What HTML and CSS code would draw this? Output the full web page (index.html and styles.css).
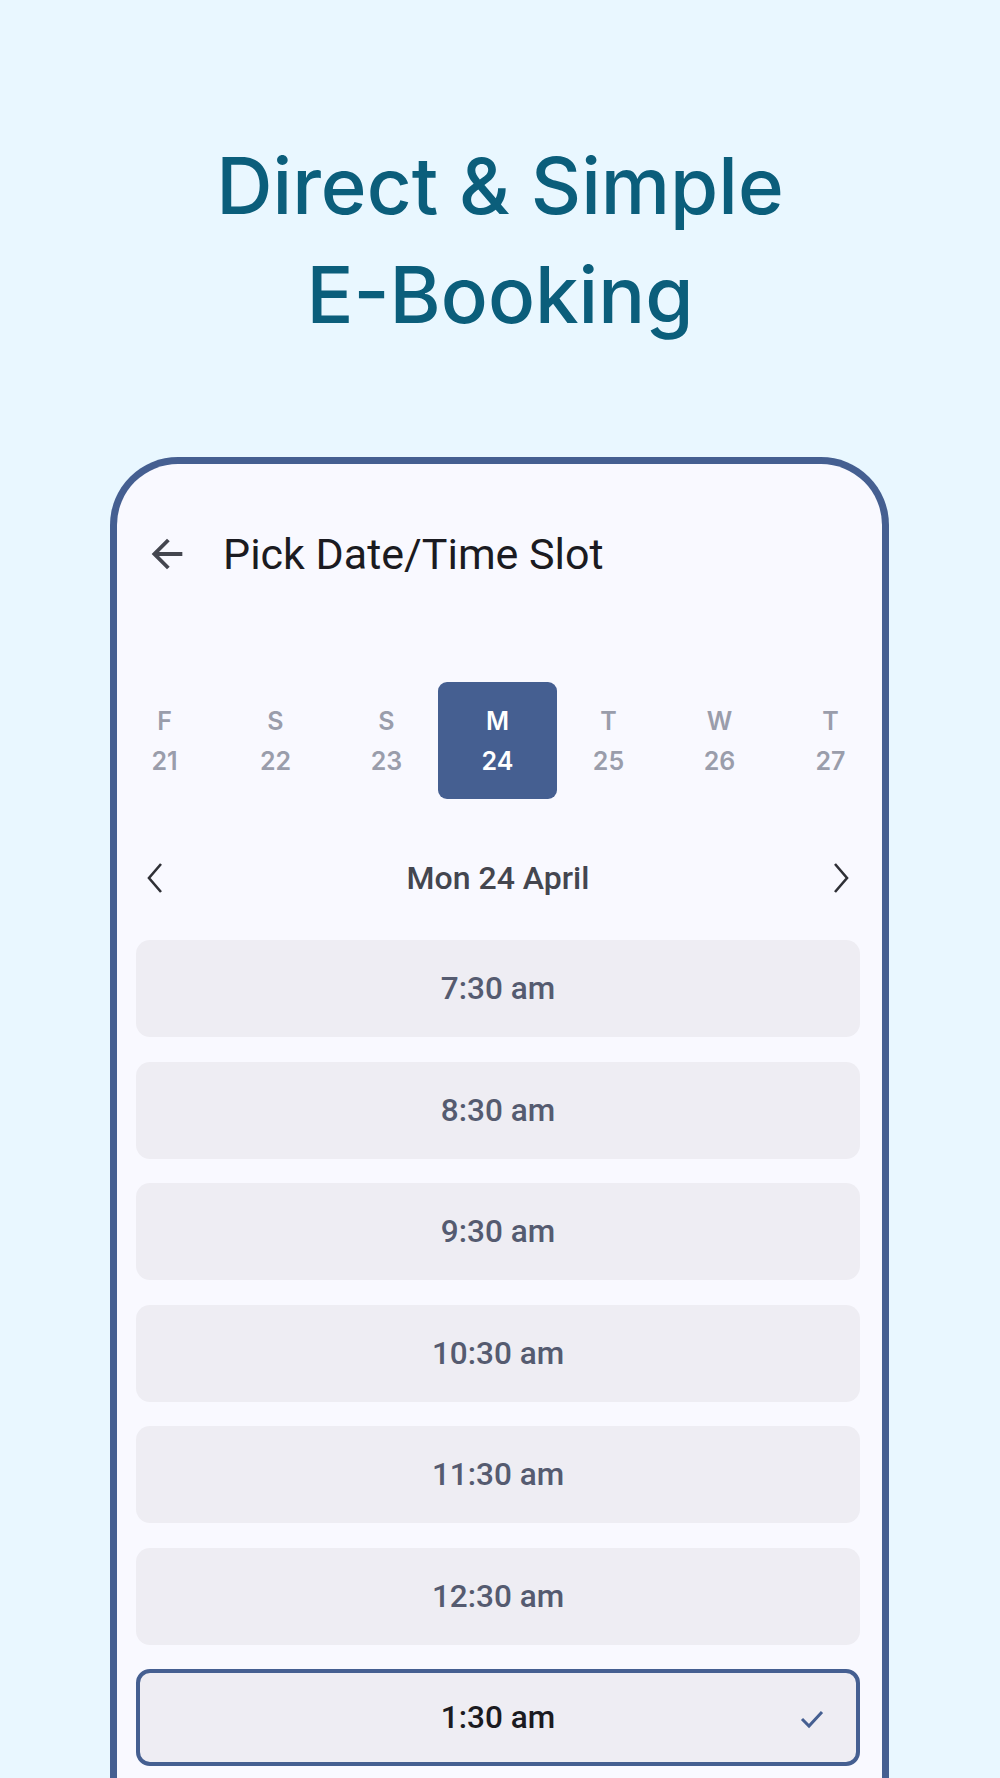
FILE: index.html
```html
<!DOCTYPE html>
<html lang="en">
<head>
    <meta charset="UTF-8">
    <meta name="viewport" content="width=device-width, initial-scale=1.0">
    <title>Direct &amp; Simple E-Booking</title>
    <link rel="stylesheet" href="styles.css">
</head>
<body>

    <h1 class="hero">Direct &amp; Simple<br>E-Booking</h1>

    <div class="phone">
        <div class="app-bar">
            <svg class="back-icon" viewBox="0 0 24 24"><path d="M20 11H7.83l5.59-5.59L12 4l-8 8 8 8 1.41-1.41L7.83 13H20v-2z"/></svg>
            <span class="app-title">Pick Date/Time Slot</span>
        </div>

        <!-- Fila de días -->
        <div class="days">
            <div class="day"><span>F</span><span>21</span></div>
            <div class="day"><span>S</span><span>22</span></div>
            <div class="day"><span>S</span><span>23</span></div>
            <div class="day active"><span>M</span><span>24</span></div>
            <div class="day"><span>T</span><span>25</span></div>
            <div class="day"><span>W</span><span>26</span></div>
            <div class="day"><span>T</span><span>27</span></div>
        </div>

        <div class="month-nav">
            <svg class="chevron" viewBox="0 0 18 32"><polyline points="15,2 3,16 15,30"/></svg>
            <span class="month-label">Mon 24 April</span>
            <svg class="chevron" viewBox="0 0 18 32"><polyline points="3,2 15,16 3,30"/></svg>
        </div>

        <!-- Horarios -->
        <div class="slots">
            <div class="slot">7:30 am</div>
            <div class="slot">8:30 am</div>
            <div class="slot">9:30 am</div>
            <div class="slot">10:30 am</div>
            <div class="slot">11:30 am</div>
            <div class="slot">12:30 am</div>
            <div class="slot selected">1:30 am
                <svg class="check" viewBox="0 0 24 20"><polyline points="2,10 9,17 22,3"/></svg>
            </div>
        </div>
    </div>

</body>
</html>
```

FILE: styles.css
```css
body {
    margin: 0;
    background: #e9f7ff;
    font-family: Roboto, "Liberation Sans", sans-serif;
    height: 1778px;
    overflow: hidden;
}

.hero {
    margin: 0;
    padding-top: 131px;
    font-family: Inter, "Liberation Sans", sans-serif;
    font-weight: 500;
    font-size: 78px;
    line-height: 109px;
    text-align: center;
    color: #0b5e7b;
}

/* Marco del teléfono */
.phone {
    margin: 108px 111px 0 110px;
    height: 1400px;
    background: #f9f9ff;
    border: 7px solid #455f91;
    border-bottom: none;
    border-radius: 68px 68px 0 0;
}

.app-bar {
    display: flex;
    align-items: center;
    height: 46px;
    margin-top: 67px;
    padding-left: 27px;
}

.back-icon {
    width: 46px;
    height: 46px;
    fill: #44464f;
}

.app-title {
    margin-left: 33px;
    font-size: 43px;
    color: #1b1b21;
}

.days {
    display: grid;
    grid-template-columns: repeat(7, 1fr);
    margin: 105px -4px 0 -8px;
}

.day {
    display: flex;
    flex-direction: column;
    justify-content: center;
    align-items: center;
    height: 117px;
    font-family: Inter, "Liberation Sans", sans-serif;
    font-weight: 600;
    font-size: 25px;
    line-height: 40px;
    color: #9a9dab;
}

.day.active {
    margin: 0 -4px;
    background: #455f91;
    border-radius: 9px;
    color: #fff;
}

.month-nav {
    display: flex;
    align-items: center;
    justify-content: space-between;
    height: 60px;
    margin-top: 49px;
    padding: 0 31px 0 28px;
}

.chevron {
    width: 20px;
    height: 32px;
    fill: none;
    stroke: #2f3036;
    stroke-width: 2.6;
}

.month-label {
    font-size: 32px;
    font-weight: 500;
    color: #44464f;
}

.slots {
    display: flex;
    flex-direction: column;
    gap: 24.5px;
    margin: 32px 22px 0 19px;
}

.slot {
    position: relative;
    display: flex;
    align-items: center;
    justify-content: center;
    height: 97px;
    box-sizing: border-box;
    background: #eeedf3;
    border-radius: 14px;
    font-size: 31.5px;
    font-weight: 500;
    color: #555b70;
}

.slot.selected {
    border: 4px solid #455f91;
    color: #1b1b21;
}

.check {
    position: absolute;
    right: 32px;
    top: 36px;
    width: 24px;
    height: 20px;
    fill: none;
    stroke: #455f91;
    stroke-width: 3;
}
```
